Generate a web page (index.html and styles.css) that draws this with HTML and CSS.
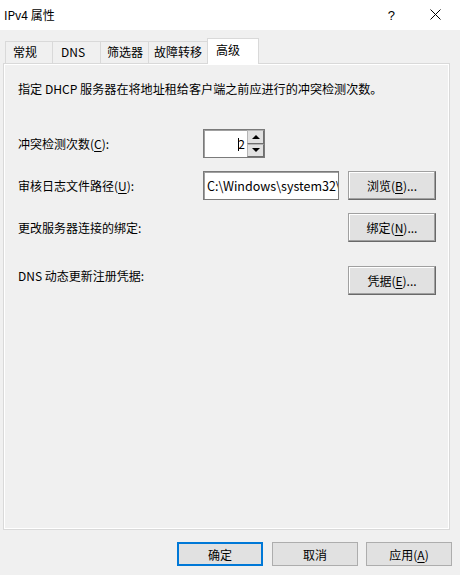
FILE: index.html
```html
<!DOCTYPE html>
<html lang="zh-CN">
<head>
<meta charset="utf-8">
<title>IPv4 属性</title>
<link rel="stylesheet" href="styles.css">
</head>
<body>
<div class="window">
  <div class="titlebar">
    <span class="title">IPv4 属性</span>
    <span class="help">?</span>
    <span class="close">
      <svg width="11" height="11" viewBox="0 0 11 11"><path d="M0.5 0.5 L10.5 10.5 M10.5 0.5 L0.5 10.5" stroke="#000" stroke-width="1" fill="none"/></svg>
    </span>
  </div>
  <div class="tabs">
    <div class="tab t1">常规</div>
    <div class="tab t2">DNS</div>
    <div class="tab t3">筛选器</div>
    <div class="tab t4">故障转移</div>
    <div class="tab t5 active">高级</div>
  </div>
  <div class="panel">
    <p class="desc">指定 DHCP 服务器在将地址租给客户端之前应进行的冲突检测次数。</p>
    <div class="form">
      <div class="label">冲突检测次数(<u>C</u>):</div>
      <div class="spin">
        <div class="spin-field"><span class="caret"></span><span>2</span></div>
        <div class="spin-btns">
          <div class="spin-btn"><span class="tri up"></span></div>
          <div class="spin-btn"><span class="tri down"></span></div>
        </div>
      </div>
      <div></div><div></div>

      <div class="label">审核日志文件路径(<u>U</u>):</div>
      <div class="field"><span class="field-text">C:\Windows\system32\</span></div>
      <div></div>
      <div class="btn3d">浏览(<u>B</u>)...</div>

      <div class="label">更改服务器连接的绑定:</div>
      <div></div><div></div>
      <div class="btn3d">绑定(<u>N</u>)...</div>

      <div class="label gap-top">DNS 动态更新注册凭据:</div>
      <div class="gap-top"></div><div class="gap-top"></div>
      <div class="btn3d gap-top">凭据(<u>E</u>)...</div>
    </div>
  </div>
  <div class="footer">
    <div class="btn default">确定</div>
    <div class="btn">取消</div>
    <div class="btn">应用(<u>A</u>)</div>
  </div>
</div>
</body>
</html>
```
FILE: styles.css
```css
html, body {
  margin: 0;
  padding: 0;
  background: #f0f0f0;
  width: 460px;
  height: 575px;
  overflow: hidden;
  font-family: "Noto Sans CJK SC", "Noto Sans", sans-serif;
  font-size: 12px;
  color: #000;
}
u { text-decoration: underline; text-underline-offset: 2px; }

.titlebar {
  height: 30px;
  background: #fff;
  display: flex;
  align-items: center;
}
.title {
  margin-left: 4px;
  font-size: 12px;
  line-height: 16px;
  margin-top: -1px;
}
.help {
  margin-left: auto;
  margin-right: 35px;
  font-size: 13px;
  font-family: "Liberation Sans", sans-serif;
}
.close {
  margin-right: 19px;
  display: flex;
  margin-top: -1px;
}

.tabs {
  display: flex;
  align-items: flex-end;
  height: 33px;
  padding-left: 5px;
  position: relative;
  z-index: 2;
}
.tab {
  box-sizing: border-box;
  height: 22px;
  border: 1px solid #d9d9d9;
  border-bottom: none;
  border-right: none;
  background: #f0f0f0;
  padding-left: 7px;
  line-height: 20px;
}
.t1 { width: 47px; }
.t2 { width: 48px; padding-left: 8px; }
.t3 { width: 48px; padding-left: 6px; }
.t4 { width: 59px; padding-left: 5px; }
.tab.active {
  width: 52px;
  height: 26px;
  background: #fff;
  border-right: 1px solid #d9d9d9;
  padding-left: 8px;
  line-height: 22px;
  margin-bottom: -1px;
}

.panel {
  box-sizing: border-box;
  margin-left: 3px;
  width: 447px;
  height: 467px;
  border: 1px solid #d9d9d9;
  box-shadow: inset 1px 1px 0 #fff, inset -1px -1px 0 #fff;
  padding: 0 0 0 14px;
}
.desc {
  margin: 17px 0 0 0;
  line-height: 16px;
  font-size: 12.1px;
}
.form {
  display: grid;
  grid-template-columns: 185px 136px 9px 88px;
  grid-auto-rows: 29px;
  row-gap: 13px;
  margin-top: 32px;
}
.label {
  display: flex;
  align-items: center;
}
.gap-top { margin-top: 11px; }

.spin {
  width: 62px;
  height: 29px;
  box-sizing: border-box;
  display: flex;
  border: 1px solid #7a7a7a;
  box-shadow: inset 1px 1px 0 #a0a0a0;
  background: #fff;
}
.spin-field {
  flex: 1;
  display: flex;
  align-items: center;
  justify-content: flex-end;
  padding-right: 2px;
}
.caret {
  display: inline-block;
  width: 1px;
  height: 13px;
  background: #000;
  margin-right: -1px;
  position: relative;
  top: 1px;
}
.spin-btns {
  width: 17px;
  display: flex;
  flex-direction: column;
}
.spin-btn {
  flex: 1;
  background: #e1e1e1;
  border: 1px solid #b5b5b5;
  border-right-color: #6e6e6e;
  border-bottom-color: #6e6e6e;
  display: flex;
  align-items: center;
  justify-content: center;
}
.tri {
  width: 0;
  height: 0;
  border-left: 4px solid transparent;
  border-right: 4px solid transparent;
}
.tri.up { border-bottom: 4px solid #000; }
.tri.down { border-top: 4px solid #000; }

.field {
  box-sizing: border-box;
  height: 29px;
  border: 1px solid #7a7a7a;
  box-shadow: inset 1px 1px 0 #a0a0a0;
  background: #fff;
  padding-left: 3px;
  display: flex;
  align-items: center;
  white-space: nowrap;
  overflow: hidden;
}
.field-text {
  font-size: 12.5px;
}

.btn3d {
  box-sizing: border-box;
  height: 29px;
  background: #e1e1e1;
  border: 1px solid;
  border-color: #a0a0a0 #696969 #696969 #a0a0a0;
  box-shadow: inset -1px -1px 0 #a0a0a0, inset 1px 1px 0 #fff;
  display: flex;
  align-items: center;
  justify-content: center;
}

.footer {
  display: flex;
  justify-content: flex-end;
  gap: 8px;
  padding-right: 8px;
  margin-top: 12px;
}
.btn {
  box-sizing: border-box;
  width: 86px;
  height: 24px;
  background: #e1e1e1;
  border: 1px solid #adadad;
  display: flex;
  align-items: center;
  justify-content: center;
}
.btn.default {
  border: 2px solid #0078d7;
  margin-right: 1px;
}
```
